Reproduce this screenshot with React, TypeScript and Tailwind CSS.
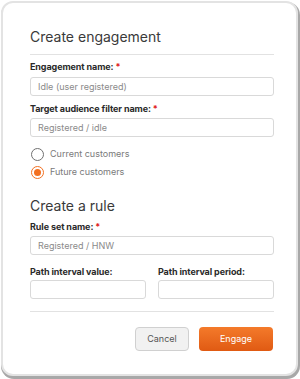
import React from "react";

function Label({ text, req }: { text: string; req?: boolean }) {
  return (
    <div className="text-[9px] font-bold text-[#2a2a2a] leading-[12px] tracking-[-0.1px]">
      {text}
      {req && <span className="text-[#e02020] ml-[2px]">*</span>}
    </div>
  );
}

function Input({ value }: { value?: string }) {
  return (
    <div className="h-[19px] border border-[#d9d9d9] rounded-[3px] bg-white px-[7px] flex items-center text-[9px] text-[#8a8a8a]">
      {value}
    </div>
  );
}

function Radio({ checked, label }: { checked?: boolean; label: string }) {
  return (
    <div className="flex items-center gap-[6px] h-[14px]">
      {checked ? (
        <div className="w-[13px] h-[13px] rounded-full border-[1.5px] border-[#f37021] flex items-center justify-center bg-white">
          <div className="w-[7px] h-[7px] rounded-full bg-[#f37021]" />
        </div>
      ) : (
        <div className="w-[13px] h-[13px] rounded-full border-[1.5px] border-[#707070] bg-white" />
      )}
      <span className="text-[9px] text-[#7a7a7a]">{label}</span>
    </div>
  );
}

export default function App() {
  return (
    <div
      className="w-[300px] h-[379px] bg-white pl-[1px] pt-[1px]"
      style={{ fontFamily: "Inter, 'Noto Sans', sans-serif" }}
    >
      <div className="h-[375px] w-[297px] rounded-[12px] border-2 border-[#e3e3e3] shadow-[1px_2px_0_1px_#a8a8a8] bg-white pl-[27px] pr-[22px] pt-[25px]">
        <div className="text-[14px] text-[#3a3a3a] leading-[17px]">Create engagement</div>
        <div className="h-px bg-[#e2e2e2] mt-[9px] mb-[6px]" />
        <Label text="Engagement name:" req />
        <div className="mt-[4px]">
          <Input value="Idle (user registered)" />
        </div>
        <div className="mt-[7px]">
          <Label text="Target audience filter name:" req />
        </div>
        <div className="mt-[3px]">
          <Input value="Registered / idle" />
        </div>
        <div className="mt-[10px] ml-[1px] flex flex-col gap-[4px]">
          <Radio label="Current customers" />
          <Radio checked label="Future customers" />
        </div>
        <div className="mt-[18px] text-[14px] text-[#3a3a3a] leading-[17px]">Create a rule</div>
        <div className="mt-[7px]">
          <Label text="Rule set name:" req />
        </div>
        <div className="mt-[3px]">
          <Input value="Registered / HNW" />
        </div>
        <div className="mt-[11px] grid grid-cols-2 gap-x-[12px]">
          <div>
            <Label text="Path interval value:" />
            <div className="mt-[2px]">
              <Input />
            </div>
          </div>
          <div>
            <Label text="Path interval period:" />
            <div className="mt-[2px]">
              <Input />
            </div>
          </div>
        </div>
        <div className="h-px bg-[#e2e2e2] mt-[12px]" />
        <div className="flex justify-end gap-[10px] mt-[15px] pr-[1px]">
          <button className="w-[54px] h-[24px] rounded-[4px] border border-[#d0d0d0] bg-[#f1f1f1] text-[9px] text-[#555]">
            Cancel
          </button>
          <button className="w-[74px] h-[24px] rounded-[4px] bg-gradient-to-b from-[#f47a2a] to-[#e05a12] text-[9px] text-white">
            Engage
          </button>
        </div>
      </div>
    </div>
  );
}
